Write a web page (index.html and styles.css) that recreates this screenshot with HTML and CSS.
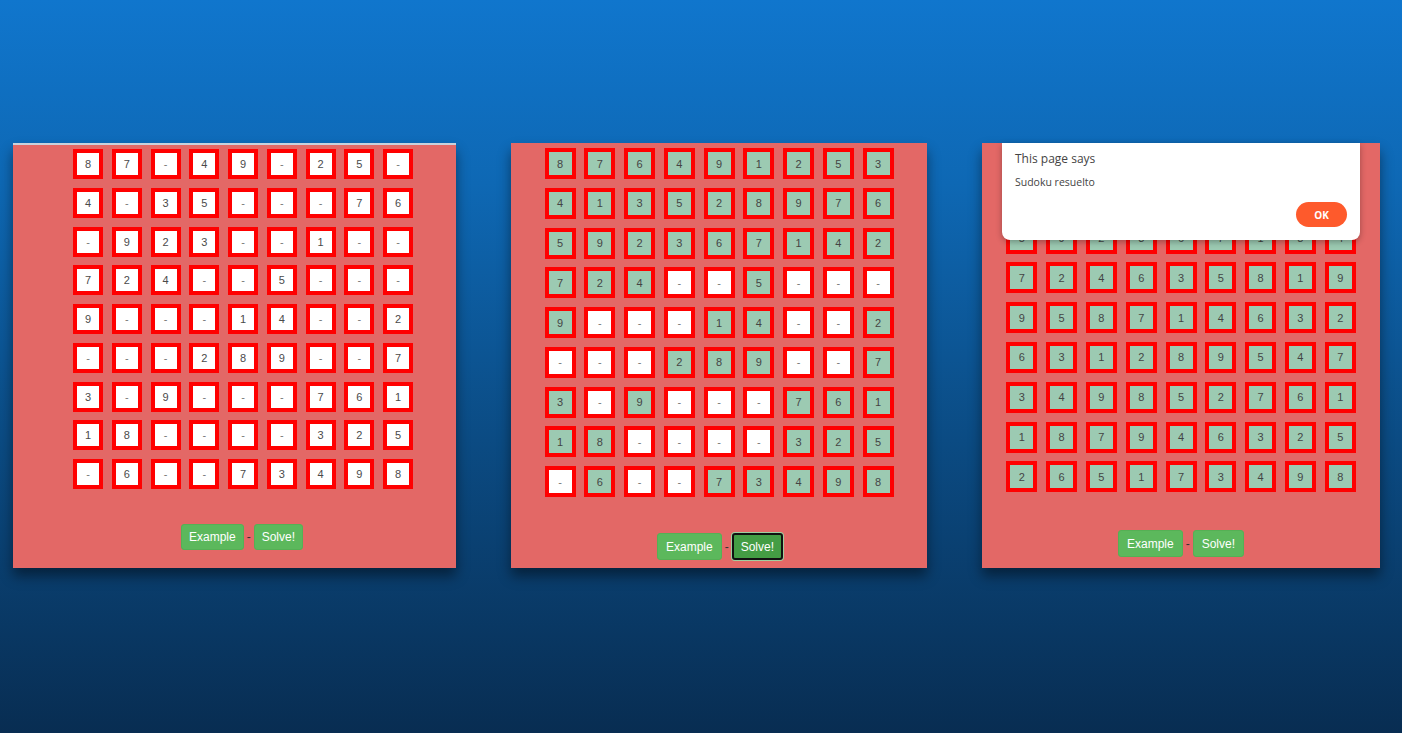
FILE: index.html
```html
<!DOCTYPE html>
<html>
<head>
<meta charset="utf-8">
<link rel="stylesheet" href="styles.css">
</head>
<body>
<div class="stage">
  <div class="panel p1">
    <div class="grid g1" id="g1"></div>
    <div class="actions a1"><button class="btn">Example</button> - <button class="btn">Solve!</button></div>
  </div>
  <div class="panel p2">
    <div class="grid g2" id="g2"></div>
    <div class="actions a2"><button class="btn">Example</button> - <button class="btn focus">Solve!</button></div>
  </div>
  <div class="panel p3">
    <div class="grid g3" id="g3"></div>
    <div class="actions a3"><button class="btn">Example</button> - <button class="btn">Solve!</button></div>
    <div class="dialog">
      <div class="dlg-title">This page says</div>
      <div class="dlg-msg">Sudoku resuelto</div>
      <div class="dlg-foot"><button class="ok">OK</button></div>
    </div>
  </div>
</div>
<script src="app.js"></script>
</body>
</html>
```
FILE: app.js
```js
var puzzle = [
  "87-49-25-",
  "4-35---76",
  "-923--1--",
  "724--5---",
  "9---14--2",
  "---289--7",
  "3-9---761",
  "18----325",
  "-6--73498"
];
var partial = [
  "876491253",
  "413528976",
  "592367142",
  "724--5---",
  "9---14--2",
  "---289--7",
  "3-9---761",
  "18----325",
  "-6--73498"
];
/* rows 1-2 sit under the alert dialog and are not visible */
var solved = [
  "         ",
  "         ",
  "592367184",
  "724635819",
  "958714632",
  "631289547",
  "349852761",
  "187946325",
  "265173498"
];
function fill(id, data, colored) {
  var g = document.getElementById(id);
  data.forEach(function (row) {
    row.split("").forEach(function (ch) {
      var c = document.createElement("div");
      var cls = "cell";
      if (colored && ch !== "-") cls += " filled";
      if (ch === "-") cls += " empty";
      c.className = cls;
      c.textContent = ch === " " ? "" : ch;
      g.appendChild(c);
    });
  });
}
fill("g1", puzzle, false);
fill("g2", partial, true);
fill("g3", solved, true);
```
FILE: styles.css
```css
html, body {
  margin: 0;
  padding: 0;
}
body {
  width: 1402px;
  height: 733px;
  overflow: hidden;
  background: linear-gradient(to bottom, #1076cd 0%, #0e68b4 25%, #0b4b83 60%, #082d52 100%);
  font-family: "Liberation Sans", Arial, sans-serif;
}
.stage {
  display: flex;
  align-items: flex-start;
  gap: 55px;
  padding: 143px 0 0 13px;
}
.panel {
  position: relative;
  background: #e36866;
  height: 425px;
  box-sizing: border-box;
  box-shadow: 0 8px 12px rgba(0, 0, 0, 0.45);
  display: flex;
  flex-direction: column;
}
.p1 {
  width: 443px;
  border-top: 2px solid #c9d2dc;
  padding: 4px 0 0 60px;
}
.p2 {
  width: 416px;
  padding-top: 5px;
  align-items: center;
}
.p3 {
  width: 398px;
  padding-top: 0;
  align-items: center;
}
.grid {
  display: grid;
}
.g1 {
  grid-template-columns: repeat(9, 30px);
  grid-auto-rows: 30px;
  gap: 8.75px;
}
.g2 {
  grid-template-columns: repeat(9, 31px);
  grid-auto-rows: 31px;
  gap: 8.75px;
}
.g3 {
  grid-template-columns: repeat(9, 31px);
  grid-auto-rows: 31px;
  gap: 8.8px;
}
.cell {
  box-sizing: border-box;
  border: 4px solid #ff0000;
  background: #ffffff;
  color: #4a4a4a;
  font-size: 11px;
  display: flex;
  align-items: center;
  justify-content: center;
}
.cell.empty {
  color: #777;
}
.cell.filled {
  background: #9ccab2;
  color: #444;
}
.actions {
  display: flex;
  align-items: center;
  gap: 3px;
  font-size: 12px;
  color: #333;
}
.a1 {
  margin-top: 35px;
  padding-left: 108px;
}
.a2 {
  margin-top: 36px;
  padding-left: 2px;
}
.a3 {
  margin-top: 38px;
  padding-left: 0;
}
.btn {
  font-family: "Liberation Sans", Arial, sans-serif;
  font-size: 12px;
  color: #fff;
  background: #5cb85c;
  border: 1px solid #55b055;
  border-radius: 3px;
  height: 26px;
  padding: 0 7px;
  margin: 0;
}
.a2 .btn, .a3 .btn {
  height: 27px;
  padding: 0 8px;
}
.a2 .btn.focus {
  background: #449d44;
  border: 2px solid #111;
  box-shadow: 0 0 0 1px #9fcf9f;
  padding: 0 7px;
}
.dialog {
  position: absolute;
  left: 20px;
  top: 0;
  width: 358px;
  height: 97px;
  box-sizing: border-box;
  background: #fff;
  border-radius: 0 0 8px 8px;
  box-shadow: 0 2px 6px rgba(0, 0, 0, 0.3);
  padding: 8px 13px 0 13px;
  font-family: "Open Sans", "Noto Sans", sans-serif;
  color: #444;
}
.dlg-title {
  font-size: 12px;
  line-height: 16px;
}
.dlg-msg {
  font-size: 10.5px;
  line-height: 14px;
  margin-top: 8px;
}
.dlg-foot {
  display: flex;
  justify-content: flex-end;
  margin-top: 13px;
}
.ok {
  width: 51px;
  height: 25px;
  border: none;
  border-radius: 13px;
  background: #fe5a2c;
  color: #fff;
  font-family: "Open Sans", "Noto Sans", sans-serif;
  font-weight: 700;
  font-size: 10px;
  margin-right: 0;
}
```
